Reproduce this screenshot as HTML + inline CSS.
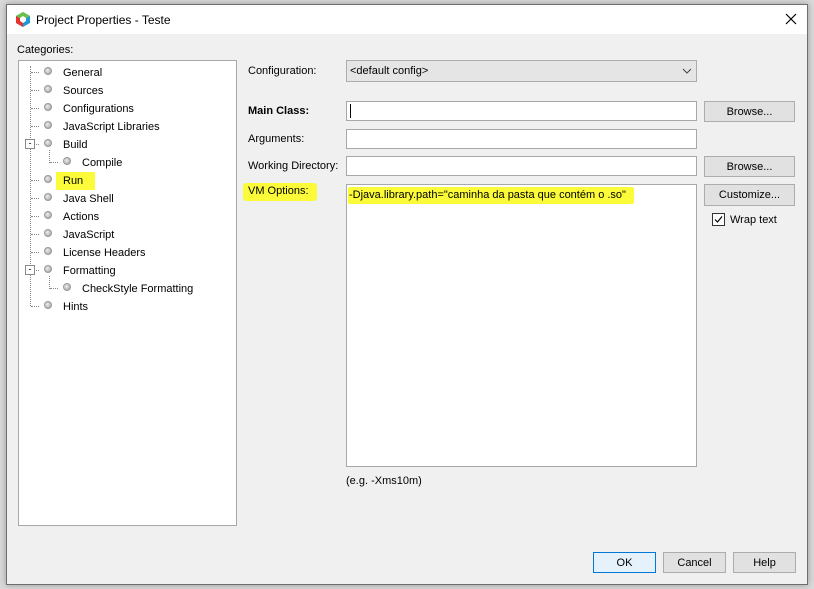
<!DOCTYPE html>
<html><head><meta charset="utf-8"><style>
*{margin:0;padding:0;box-sizing:border-box}
body{width:814px;height:589px;background:#d9d9d9;position:relative;overflow:hidden;font-family:"Liberation Sans",sans-serif;font-size:11px;color:#000}
.a{position:absolute}
.dlg{left:6px;top:4px;width:802px;height:581px;background:#f0f0f0;border:1px solid #6e6e6e;box-shadow:0 0 6px rgba(0,0,0,.3)}
.title{left:7px;top:5px;width:800px;height:29px;background:#fff}
.tree{left:18px;top:60px;width:219px;height:466px;background:#fff;border:1px solid #a8a8a8}
.row{position:absolute;height:18px;line-height:18px;font-size:11px}
.dot{position:absolute;width:8px;height:8px;border-radius:50%;background:radial-gradient(circle at 40% 40%,#eee,#999);border:1px solid #999}
.hl{position:absolute;border-top:1px dotted #888;width:8px}
.vl{position:absolute;border-left:1px dotted #888}
.inp{position:absolute;background:#fff;border:1px solid #a8a8a8}
.btn{position:absolute;background:#e1e1e1;border:1px solid #adadad;text-align:center;font-size:11px}
.lbl{position:absolute;font-size:11px}
.y{background:#fbfb3a}
</style></head><body>
<div class="a dlg"></div>
<div class="a title"></div>
<svg class="a" style="left:15px;top:11px" width="16" height="17" viewBox="0 0 16 17"><polygon points="8,1 15,5 15,12 8,16 1,12 1,5" fill="#1e9ad6"/><polygon points="8,1 15,5 8,9 1,5" fill="#6cc04a"/><polygon points="1,5 8,9 8,16 1,12" fill="#e8322e"/><polygon points="8,5 11,7 11,10 8,12 5,10 5,7" fill="#fff"/></svg>
<div class="a" style="left:36px;top:13px;font-size:12px">Project Properties - Teste</div>
<svg class="a" style="left:785px;top:13px" width="12" height="12"><path d="M1 1L11 11M11 1L1 11" stroke="#000" stroke-width="1.2"/></svg>
<div class="lbl" style="left:17px;top:44px">Categories:</div>
<div class="a tree"></div>
<div class="vl" style="left:30px;top:66px;height:240px"></div>
<div class="vl" style="left:49px;top:150px;height:13px"></div>
<div class="vl" style="left:49px;top:276px;height:13px"></div>
<div id="t"></div>
<script>
var r=[["General",0],["Sources",0],["Configurations",0],["JavaScript Libraries",0],["Build",0,1],["Compile",1],["Run",0],["Java Shell",0],["Actions",0],["JavaScript",0],["License Headers",0],["Formatting",0,1],["CheckStyle Formatting",1],["Hints",0]];
var h="";r.forEach(function(e,i){var y=62+i*18,c=y+10,l=e[1]?19:0;
h+='<div class="hl" style="left:'+(31+l)+'px;top:'+c+'px"></div>';
h+='<div class="dot" style="left:'+(44+l)+'px;top:'+(c-5)+'px"></div>';
if(e[2])h+='<div class="a" style="left:25px;top:'+(c-5)+'px;width:10px;height:10px;border:1px solid #888;background:#fff;font-size:9px;line-height:7px;text-align:center">-</div>';
h+='<div class="row'+(e[0]=="Run"?' y':'')+'" style="left:'+(e[0]=="Run"?56:63+l)+'px;top:'+(y+2)+'px;'+(e[0]=="Run"?'padding:0 12px 0 7px;':'')+'">'+e[0]+'</div>';});
document.getElementById("t").innerHTML=h;
</script>
<div class="lbl" style="left:248px;top:65px">Configuration:</div>
<div class="a" style="left:346px;top:60px;width:351px;height:22px;background:#e5e5e5;border:1px solid #adadad;padding:4px 3px;font-size:11px">&lt;default config&gt;</div>
<svg class="a" style="left:682px;top:68px" width="10" height="6"><path d="M1 1L5 5L9 1" stroke="#444" fill="none"/></svg>
<div class="lbl" style="left:248px;top:105px;font-weight:bold">Main Class:</div>
<div class="inp" style="left:346px;top:101px;width:351px;height:20px"></div>
<div class="a" style="left:350px;top:104px;width:1px;height:14px;background:#000"></div>
<div class="btn" style="left:704px;top:101px;width:91px;height:21px;line-height:20px">Browse...</div>
<div class="lbl" style="left:248px;top:133px">Arguments:</div>
<div class="inp" style="left:346px;top:129px;width:351px;height:20px"></div>
<div class="lbl" style="left:248px;top:160px">Working Directory:</div>
<div class="inp" style="left:346px;top:156px;width:351px;height:20px"></div>
<div class="btn" style="left:704px;top:156px;width:91px;height:21px;line-height:20px">Browse...</div>
<div class="lbl y" style="left:243px;top:183px;padding:2px 8px 4px 5px;border-radius:3px">VM Options:</div>
<div class="inp" style="left:346px;top:184px;width:351px;height:283px"></div>
<div class="lbl y" style="left:348px;top:187px;padding:2px 8px 3px 1px;border-radius:2px">-Djava.library.path="caminha da pasta que contém o .so"</div>
<div class="btn" style="left:704px;top:184px;width:91px;height:22px;line-height:21px">Customize...</div>
<div class="a" style="left:712px;top:213px;width:13px;height:13px;border:1px solid #333;background:#fff"></div>
<svg class="a" style="left:713px;top:214px" width="11" height="11"><path d="M2 5.5L4.5 8L9 2.5" stroke="#000" fill="none" stroke-width="1.2"/></svg>
<div class="lbl" style="left:730px;top:214px">Wrap text</div>
<div class="lbl" style="left:346px;top:475px">(e.g. -Xms10m)</div>
<div class="btn" style="left:593px;top:552px;width:63px;height:21px;line-height:20px;border:1px solid #0078d7;background:#e5f1fb">OK</div>
<div class="btn" style="left:663px;top:552px;width:63px;height:21px;line-height:20px">Cancel</div>
<div class="btn" style="left:733px;top:552px;width:63px;height:21px;line-height:20px">Help</div>
</body></html>
